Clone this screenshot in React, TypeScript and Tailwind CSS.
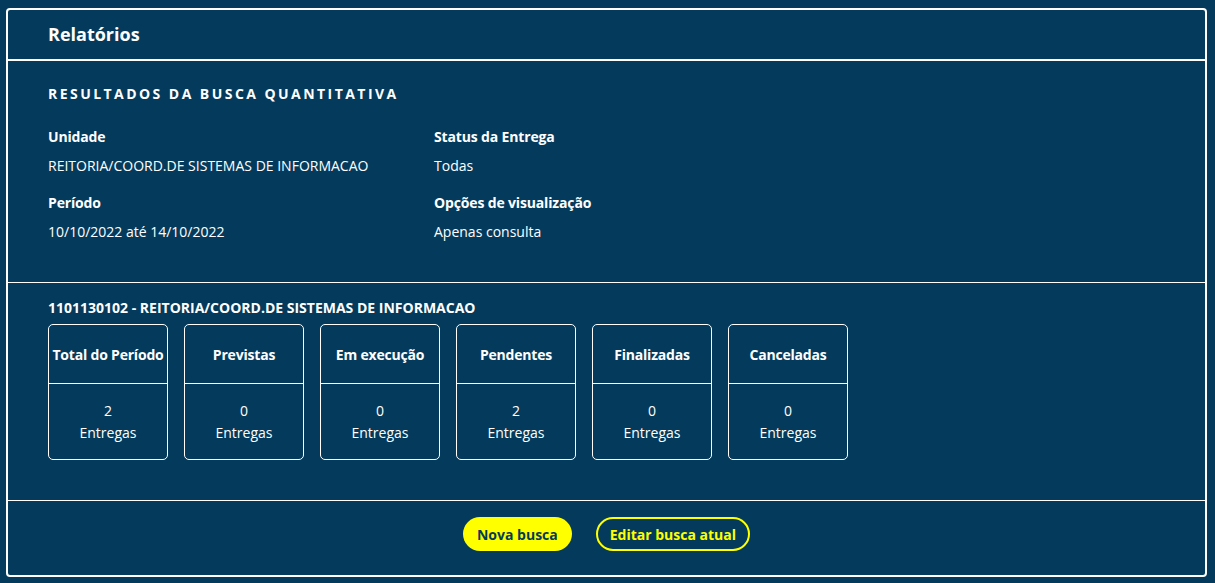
const stats = [
  { label: "Total do Período", value: 2 },
  { label: "Previstas", value: 0 },
  { label: "Em execução", value: 0 },
  { label: "Pendentes", value: 2 },
  { label: "Finalizadas", value: 0 },
  { label: "Canceladas", value: 0 },
];

function Field({ label, value }: { label: string; value: string }) {
  return (
    <div className="flex flex-col">
      <span className="font-bold text-[14px] leading-[20px] tracking-[-0.15px]">{label}</span>
      <span className="mt-[9px] text-[14px] leading-[20px]">{value}</span>
    </div>
  );
}

export default function App() {
  return (
    <div
      className="w-[1215px] h-[583px] bg-[#043b5c] text-white pt-[8px] pl-[6px] pr-[8px]"
      style={{ fontFamily: '"Open Sans", "Noto Sans", sans-serif' }}
    >
      <div className="h-[569px] border-2 border-white rounded-[4px] flex flex-col">
        <div className="h-[51px] border-b-2 border-white flex items-center pl-[40px]">
          <h1 className="font-bold text-[18px]">Relatórios</h1>
        </div>

        <div className="h-[222px] border-b border-white pl-[40px] pt-[23px]">
          <h2 className="font-bold text-[14px] leading-[20px] tracking-[2.45px]">
            RESULTADOS DA BUSCA QUANTITATIVA
          </h2>
          <div className="grid grid-cols-[386px_1fr] gap-y-[17px] mt-[23px]">
            <Field label="Unidade" value="REITORIA/COORD.DE SISTEMAS DE INFORMACAO" />
            <Field label="Status da Entrega" value="Todas" />
            <Field label="Período" value="10/10/2022 até 14/10/2022" />
            <Field label="Opções de visualização" value="Apenas consulta" />
          </div>
        </div>

        <div className="h-[218px] border-b border-white pl-[40px] pt-[15px]">
          <h3 className="font-bold text-[14px] leading-[20px]">
            1101130102 - REITORIA/COORD.DE SISTEMAS DE INFORMACAO
          </h3>
          <div className="flex gap-[16px] mt-[6px]">
            {stats.map((s) => (
              <div
                key={s.label}
                className="w-[120px] h-[136px] border border-white rounded-[5px] flex flex-col"
              >
                <div className="h-[59px] border-b border-white flex items-center justify-center font-bold text-[14px] whitespace-nowrap tracking-[-0.2px]">
                  {s.label}
                </div>
                <div className="flex-1 flex flex-col items-center justify-center text-[14px] leading-[22px]">
                  <span>{s.value}</span>
                  <span>Entregas</span>
                </div>
              </div>
            ))}
          </div>
        </div>

        <div className="flex-1 flex justify-center items-start gap-[24px] pt-[16px]">
          <button className="h-[34px] px-[14px] rounded-full bg-[#ffff00] text-[#043b5c] font-bold text-[14px]">
            Nova busca
          </button>
          <button className="h-[34px] px-[12px] rounded-full border-2 border-[#ffff00] text-[#ffff00] font-bold text-[14px]">
            Editar busca atual
          </button>
        </div>
      </div>
    </div>
  );
}
